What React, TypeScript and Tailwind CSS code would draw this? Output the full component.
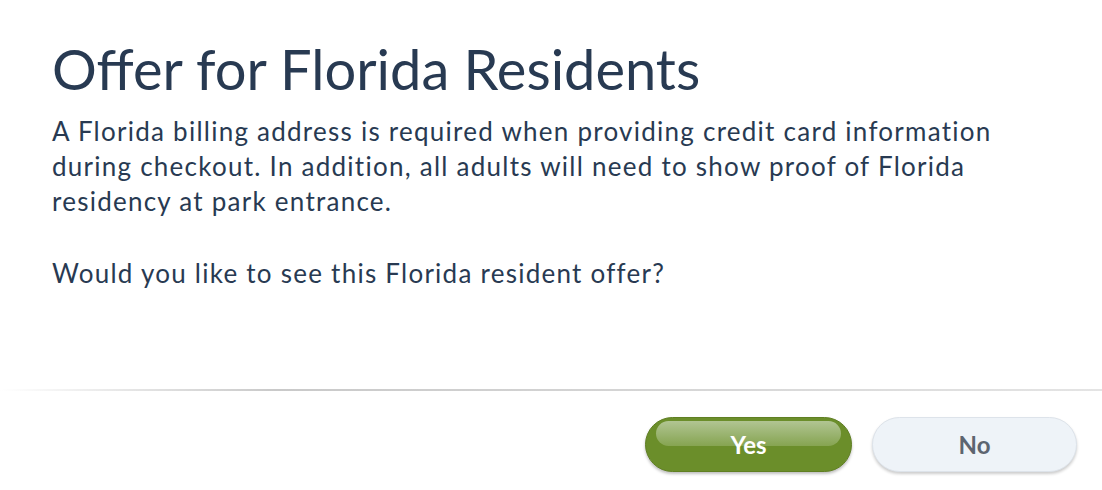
export default function App() {
  return (
    <div
      className="flex h-[490px] w-[1102px] flex-col bg-white text-[#283a52]"
      style={{ fontFamily: "Lato, 'Open Sans', sans-serif" }}
    >
      <div className="flex h-[389px] flex-col pl-[52px] pr-[20px] pt-[37px]">
        <h1 className="text-[56px] font-normal leading-[64px]">
          Offer for Florida Residents
        </h1>
        <div className="mt-[13px] text-[26px] leading-[35px] tracking-[1.25px]">
          <p>
            A Florida billing address is required when providing credit card information
            <br />
            during checkout. In addition, all adults will need to show proof of Florida
            <br />
            residency at park entrance.
          </p>
          <p className="mt-[37px]">Would you like to see this Florida resident offer?</p>
        </div>
      </div>

      <div className="h-[2px] w-full bg-gradient-to-r from-white via-[#c9c9c9] via-25% to-[#e4e4e4]" />

      <div className="flex flex-1 items-start justify-end gap-[20px] pr-[25px] pt-[26px]">
        <button className="relative h-[55px] w-[207px] overflow-hidden rounded-full border border-[#5f7f22] bg-[#6b8e2a] shadow-[0_2px_3px_rgba(0,0,0,0.25)]">
          <span className="absolute left-[10px] right-[10px] top-[3px] h-[25px] rounded-full bg-gradient-to-b from-[#b1c592] to-[#86a450]" />
          <span className="relative text-[24px] font-bold text-white">Yes</span>
        </button>
        <button className="h-[55px] w-[205px] rounded-full border border-[#dde3ea] bg-[#eef3f8] shadow-[0_2px_3px_rgba(0,0,0,0.2)]">
          <span className="text-[24px] font-bold text-[#5d6570]">No</span>
        </button>
      </div>
    </div>
  );
}
